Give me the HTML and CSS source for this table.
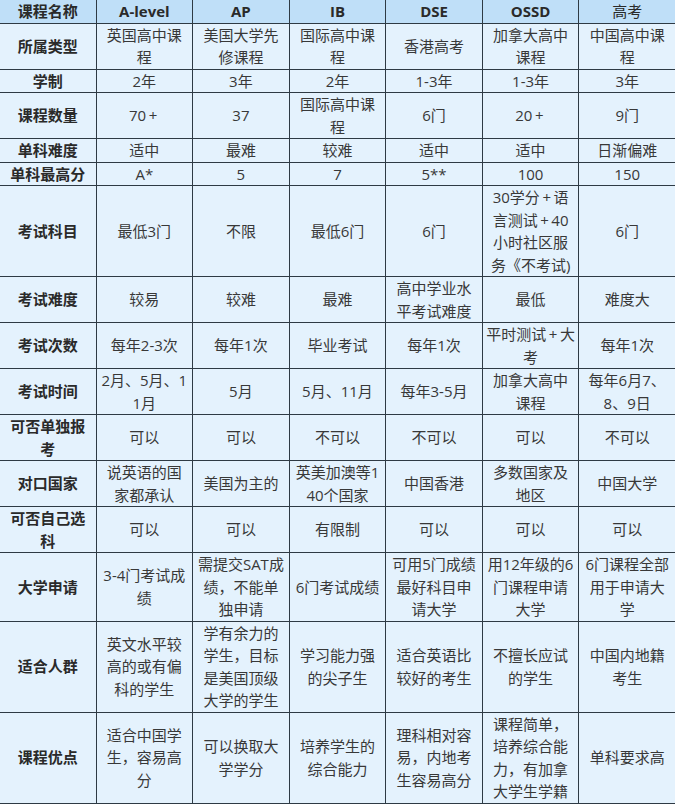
FILE: index.html
```html
<!DOCTYPE html>
<html lang="zh-CN">
<head>
<meta charset="utf-8">
<title>课程对比</title>
<link rel="stylesheet" href="styles.css">
</head>
<body>
<table class="cmp">
  <thead>
    <tr><th>课程名称</th><th>A-level</th><th>AP</th><th>IB</th><th>DSE</th><th>OSSD</th><th class="plain">高考</th></tr>
  </thead>
  <tbody>
    <tr><th>所属类型</th><td>英国高中课程</td><td>美国大学先修课程</td><td>国际高中课程</td><td>香港高考</td><td>加拿大高中课程</td><td>中国高中课程</td></tr>
    <tr><th>学制</th><td>2年</td><td>3年</td><td>2年</td><td>1-3年</td><td>1-3年</td><td>3年</td></tr>
    <tr><th>课程数量</th><td>70<span class="pl">+</span></td><td>37</td><td>国际高中课程</td><td>6门</td><td>20<span class="pl">+</span></td><td>9门</td></tr>
    <tr><th>单科难度</th><td>适中</td><td>最难</td><td>较难</td><td>适中</td><td>适中</td><td>日渐偏难</td></tr>
    <tr><th>单科最高分</th><td>A*</td><td>5</td><td>7</td><td>5**</td><td>100</td><td>150</td></tr>
    <tr><th>考试科目</th><td>最低3门</td><td>不限</td><td>最低6门</td><td>6门</td><td>30学分<span class="pl">+</span>语言测试<span class="pl">+</span>40小时社区服务《不考试)</td><td>6门</td></tr>
    <tr><th>考试难度</th><td>较易</td><td>较难</td><td>最难</td><td>高中学业水平考试难度</td><td>最低</td><td>难度大</td></tr>
    <tr><th>考试次数</th><td>每年2-3次</td><td>每年1次</td><td>毕业考试</td><td>每年1次</td><td>平时测试<span class="pl">+</span>大考</td><td>每年1次</td></tr>
    <tr><th>考试时间</th><td>2月、5月、11月</td><td>5月</td><td>5月、11月</td><td>每年3-5月</td><td>加拿大高中课程</td><td>每年6月7、8、9日</td></tr>
    <tr><th>可否单独报考</th><td>可以</td><td>可以</td><td>不可以</td><td>不可以</td><td>可以</td><td>不可以</td></tr>
    <tr><th>对口国家</th><td>说英语的国家都承认</td><td>美国为主的</td><td>英美加澳等140个国家</td><td>中国香港</td><td>多数国家及地区</td><td>中国大学</td></tr>
    <tr><th>可否自己选科</th><td>可以</td><td>可以</td><td>有限制</td><td>可以</td><td>可以</td><td>可以</td></tr>
    <tr><th>大学申请</th><td>3-4门考试成绩</td><td>需提交SAT成绩，不能单独申请</td><td>6门考试成绩</td><td>可用5门成绩最好科目申请大学</td><td>用12年级的6门课程申请大学</td><td>6门课程全部用于申请大学</td></tr>
    <tr><th>适合人群</th><td>英文水平较高的或有偏科的学生</td><td>学有余力的学生，目标是美国顶级大学的学生</td><td>学习能力强的尖子生</td><td>适合英语比较好的考生</td><td>不擅长应试的学生</td><td>中国内地籍考生</td></tr>
    <tr><th>课程优点</th><td>适合中国学生，容易高分</td><td>可以换取大学学分</td><td>培养学生的综合能力</td><td>理科相对容易，内地考生容易高分</td><td>课程简单，培养综合能力，有加拿大学生学籍</td><td>单科要求高</td></tr>
  </tbody>
</table>
</body>
</html>
```

FILE: styles.css
```css
html, body {
  margin: 0;
  padding: 0;
  background: #ffffff;
}

.cmp {
  border-collapse: collapse;
  table-layout: fixed;
  width: 677px;
  margin: -1px 0 0 -1px;
  font-family: "Open Sans", "Noto Sans CJK SC", sans-serif;
  font-size: 15px;
  line-height: 22.5px;
  color: #383838;
  word-break: break-all;
}

.cmp th,
.cmp td {
  border: 1px solid #2e3a44;
  padding: 0 3px;
  text-align: center;
  vertical-align: middle;
  background: #e4f2fd;
}

.cmp th {
  font-weight: bold;
  color: #2a2a2a;
}

.cmp thead th {
  background: #bfdff8;
}

.cmp thead th.plain {
  font-weight: normal;
}

.pl {
  padding: 0 2.5px;
}
```
